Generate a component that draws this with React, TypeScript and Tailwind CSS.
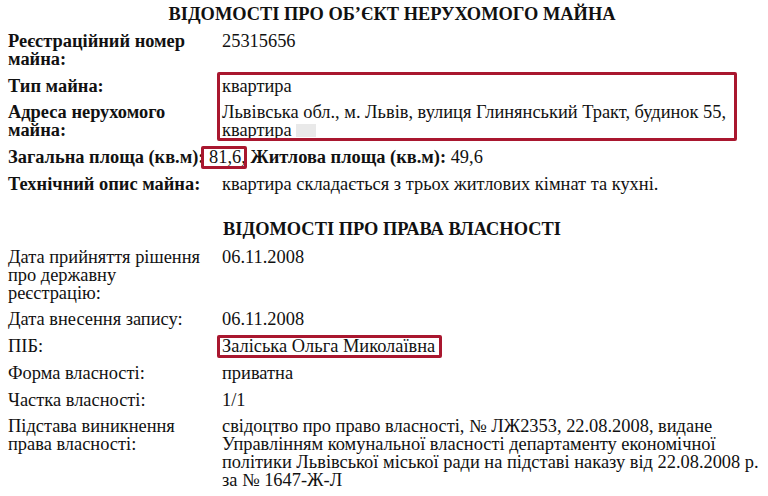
const PROPERTY_ROWS = [
  { label: "Реєстраційний номер майна:", value: "25315656" },
  { label: "Тип майна:", value: "квартира" },
];

const RIGHTS_ROWS: { label: React.ReactNode; value: string }[] = [
  {
    label: (
      <>
        Дата прийняття рішення
        <br />
        про державну
        <br />
        реєстрацію:
      </>
    ),
    value: "06.11.2008",
  },
  { label: "Дата внесення запису:", value: "06.11.2008" },
  { label: "ПІБ:", value: "Заліська Ольга Миколаївна" },
  { label: "Форма власності:", value: "приватна" },
  { label: "Частка власності:", value: "1/1" },
  {
    label: (
      <>
        Підстава виникнення
        <br />
        права власності:
      </>
    ),
    value:
      "свідоцтво про право власності, № ЛЖ2353, 22.08.2008, видане Управлінням комунальної власності департаменту економічної політики Львівської міської ради на підставі наказу від 22.08.2008 р. за № 1647-Ж-Л",
  },
];

function Row({ label, value, bold }: { label: React.ReactNode; value: React.ReactNode; bold?: boolean }) {
  return (
    <div className="flex">
      <div className={`w-[214px] shrink-0 pr-2 ${bold ? "font-bold" : ""}`}>{label}</div>
      <div className="w-[540px]">{value}</div>
    </div>
  );
}

export default function App() {
  return (
    <div className="relative w-[768px] h-[496px] overflow-hidden bg-white text-[#111] text-[18.4px] leading-[18px] pl-2 pt-[5px] font-['Liberation_Serif']">
      <h1 className="pl-2 text-center font-bold text-[18.4px] leading-[18px]">
        ВІДОМОСТІ ПРО ОБ’ЄКТ НЕРУХОМОГО МАЙНА
      </h1>

      <div className="mt-[9px] flex flex-col gap-[8.7px]">
        {PROPERTY_ROWS.map((r) => (
          <Row key={r.label} label={r.label} value={r.value} bold />
        ))}
        <Row
          bold
          label="Адреса нерухомого майна:"
          value={
            <>
              Львівська обл., м. Львів, вулиця Глинянський Тракт, будинок 55, квартира{" "}
              <span className="inline-block w-[20px] h-[13px] align-[-1px] bg-[#e9e9e9]" />
            </>
          }
        />
        <div>
          <b>Загальна площа (кв.м):</b> 81,6, <b>Житлова площа (кв.м):</b> 49,6
        </div>
        <Row bold label="Технічний опис майна:" value="квартира складається з трьох житлових кімнат та кухні." />
      </div>

      <h2 className="mt-[27px] pl-2 text-center font-bold text-[18.4px] leading-[18px]">
        ВІДОМОСТІ ПРО ПРАВА ВЛАСНОСТІ
      </h2>

      <div className="mt-[10px] flex flex-col gap-[8.7px]">
        {RIGHTS_ROWS.map((r, i) => (
          <Row key={i} label={r.label} value={r.value} />
        ))}
      </div>

      {/* red annotation frames */}
      <div className="absolute left-[217px] top-[72px] w-[520px] h-[69px] border-[3px] border-[#a9172f] rounded-[2px]" />
      <div className="absolute left-[201px] top-[146px] w-[46px] h-[23px] border-[3px] border-[#a9172f] rounded-[2px]" />
      <div className="absolute left-[217px] top-[335px] w-[225px] h-[23px] border-[3px] border-[#a9172f] rounded-[2px]" />
    </div>
  );
}
